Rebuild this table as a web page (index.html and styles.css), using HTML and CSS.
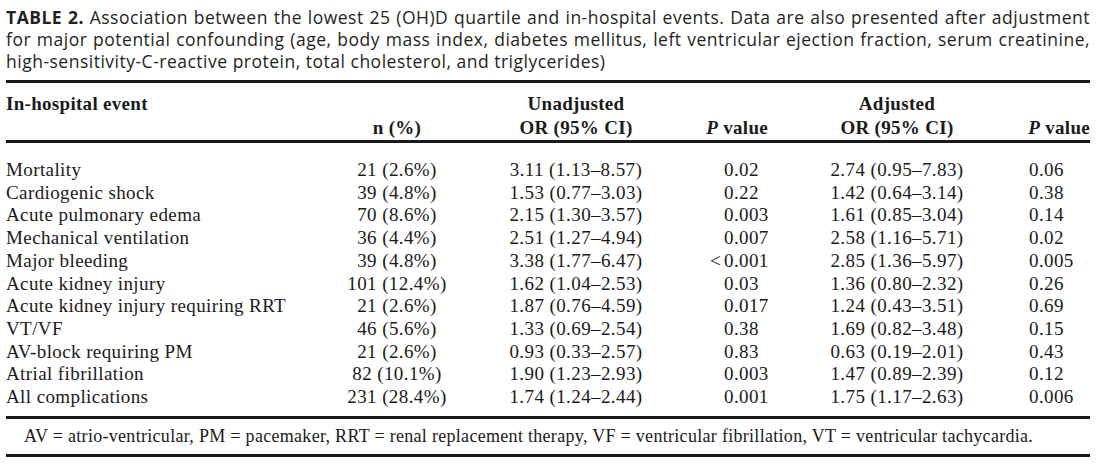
FILE: index.html
```html
<!DOCTYPE html>
<html>
<head>
<meta charset="utf-8">
<link rel="stylesheet" href="styles.css">
</head>
<body>
<div class="page">
  <p class="caption"><span class="jl"><b>TABLE 2.</b> Association between the lowest 25 (OH)D quartile and in-hospital events. Data are also presented after adjustment</span><span class="jl">for major potential confounding (age, body mass index, diabetes mellitus, left ventricular ejection fraction, serum creatinine,</span><span class="ll">high-sensitivity-C-reactive protein, total cholesterol, and triglycerides)</span></p>
  <table class="tbl">
    <colgroup>
      <col class="c1"><col class="c2"><col class="c3"><col class="c4"><col class="c5"><col class="c6">
    </colgroup>
    <thead>
      <tr class="h1">
        <th class="ev">In-hospital event</th>
        <th></th>
        <th class="ctr">Unadjusted</th>
        <th></th>
        <th class="ctr">Adjusted</th>
        <th></th>
      </tr>
      <tr class="h2">
        <th></th>
        <th class="ctr">n (%)</th>
        <th class="ctr">OR (95% CI)</th>
        <th class="pv4"><i>P</i> value</th>
        <th class="ctr">OR (95% CI)</th>
        <th class="pv6"><i>P</i> value</th>
      </tr>
    </thead>
    <tbody>
      <tr class="first"><td>Mortality</td><td class="ctr">21 (2.6%)</td><td class="ctr">3.11 (1.13–8.57)</td><td class="p4">0.02</td><td class="ctr">2.74 (0.95–7.83)</td><td class="p6">0.06</td></tr>
      <tr><td>Cardiogenic shock</td><td class="ctr">39 (4.8%)</td><td class="ctr">1.53 (0.77–3.03)</td><td class="p4">0.22</td><td class="ctr">1.42 (0.64–3.14)</td><td class="p6">0.38</td></tr>
      <tr><td>Acute pulmonary edema</td><td class="ctr">70 (8.6%)</td><td class="ctr">2.15 (1.30–3.57)</td><td class="p4">0.003</td><td class="ctr">1.61 (0.85–3.04)</td><td class="p6">0.14</td></tr>
      <tr><td>Mechanical ventilation</td><td class="ctr">36 (4.4%)</td><td class="ctr">2.51 (1.27–4.94)</td><td class="p4">0.007</td><td class="ctr">2.58 (1.16–5.71)</td><td class="p6">0.02</td></tr>
      <tr><td>Major bleeding</td><td class="ctr">39 (4.8%)</td><td class="ctr">3.38 (1.77–6.47)</td><td class="p4"><span class="lt">&lt;</span>0.001</td><td class="ctr">2.85 (1.36–5.97)</td><td class="p6">0.005</td></tr>
      <tr><td>Acute kidney injury</td><td class="ctr">101 (12.4%)</td><td class="ctr">1.62 (1.04–2.53)</td><td class="p4">0.03</td><td class="ctr">1.36 (0.80–2.32)</td><td class="p6">0.26</td></tr>
      <tr><td>Acute kidney injury requiring RRT</td><td class="ctr">21 (2.6%)</td><td class="ctr">1.87 (0.76–4.59)</td><td class="p4">0.017</td><td class="ctr">1.24 (0.43–3.51)</td><td class="p6">0.69</td></tr>
      <tr><td>VT/VF</td><td class="ctr">46 (5.6%)</td><td class="ctr">1.33 (0.69–2.54)</td><td class="p4">0.38</td><td class="ctr">1.69 (0.82–3.48)</td><td class="p6">0.15</td></tr>
      <tr><td>AV-block requiring PM</td><td class="ctr">21 (2.6%)</td><td class="ctr">0.93 (0.33–2.57)</td><td class="p4">0.83</td><td class="ctr">0.63 (0.19–2.01)</td><td class="p6">0.43</td></tr>
      <tr><td>Atrial fibrillation</td><td class="ctr">82 (10.1%)</td><td class="ctr">1.90 (1.23–2.93)</td><td class="p4">0.003</td><td class="ctr">1.47 (0.89–2.39)</td><td class="p6">0.12</td></tr>
      <tr class="last"><td>All complications</td><td class="ctr">231 (28.4%)</td><td class="ctr">1.74 (1.24–2.44)</td><td class="p4">0.001</td><td class="ctr">1.75 (1.17–2.63)</td><td class="p6">0.006</td></tr>
    </tbody>
  </table>
  <p class="foot">AV = atrio-ventricular, PM = pacemaker, RRT = renal replacement therapy, VF = ventricular fibrillation, VT = ventricular tachycardia.</p>
</div>
</body>
</html>
```

FILE: styles.css
```css
html, body {
  margin: 0;
  padding: 0;
  background: #ffffff;
}
.page {
  width: 1084px;
  padding: 6px 0 0 6px;
  color: #1a1a1a;
}
.caption {
  margin: 0;
  font-family: "Open Sans", "Liberation Sans", sans-serif;
  font-size: 17.5px;
  line-height: 22px;
  letter-spacing: 0.5px;
  word-spacing: -3px;
  color: #231f20;
}
.caption b {
  font-weight: 700;
}
.jl {
  display: block;
  white-space: nowrap;
  text-align: justify;
  text-align-last: justify;
}
.ll {
  display: block;
  white-space: nowrap;
  word-spacing: 0;
}
.tbl {
  margin-top: 8px;
  width: 1084px;
  table-layout: fixed;
  border-collapse: separate;
  border-spacing: 0;
  font-family: "Liberation Serif", "Times New Roman", serif;
  font-size: 19px;
  letter-spacing: 0.4px;
  color: #1a1a1a;
  border-top: 3px solid #1a1a1a;
}
.c1 { width: 300px; }
.c2 { width: 182px; }
.c3 { width: 176px; }
.c4 { width: 126px; }
.c5 { width: 214px; }
.c6 { width: 86px; }
.tbl th, .tbl td {
  padding: 0;
  white-space: nowrap;
  font-weight: normal;
  text-align: left;
  line-height: 22.7px;
}
.tbl thead th {
  font-weight: 700;
  line-height: 24px;
  letter-spacing: 0.3px;
}
.tbl thead .h1 th {
  padding-top: 9px;
}
.tbl thead .h2 th {
  border-bottom: 3px solid #1a1a1a;
}
.tbl thead i {
  font-style: italic;
}
.tbl .ev { text-align: left; }
.tbl .ctr { text-align: center; }
.tbl .pv4 { text-align: right; padding-right: 22px; }
.tbl .pv6 { text-align: right; }
.tbl .p4 { padding-left: 60px; }
.tbl .p6 { padding-left: 25px; }
.lt {
  display: inline-block;
  margin-left: -14px;
  width: 14px;
}
.tbl tbody tr.first td { padding-top: 16px; }
.tbl tbody tr.last td {
  padding-bottom: 7px;
  border-bottom: 3px solid #1a1a1a;
}
.foot {
  margin: 0;
  width: 1084px;
  padding: 6px 0 7px 18px;
  box-sizing: border-box;
  font-family: "Liberation Serif", "Times New Roman", serif;
  font-size: 18px;
  letter-spacing: 0.3px;
  line-height: 22px;
  color: #1a1a1a;
  border-bottom: 3px solid #1a1a1a;
}
```
